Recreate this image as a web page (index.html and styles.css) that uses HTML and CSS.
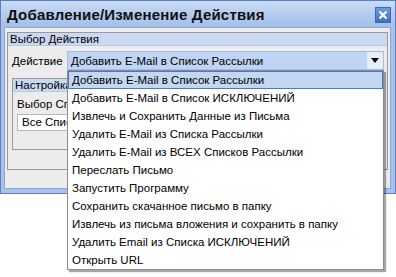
FILE: index.html
```html
<!DOCTYPE html>
<html lang="ru">

<head>
    <meta charset="UTF-8">
    <title>Добавление/Изменение Действия</title>
    <link rel="stylesheet" href="styles.css">
</head>

<body>
    <div class="window">
        <div class="titlebar">
            <span class="title">Добавление/Изменение Действия</span>
            <span class="close">
                <svg width="10" height="10" viewBox="0 0 10 10">
                    <path d="M1.5 1.5 L8.5 8.5 M8.5 1.5 L1.5 8.5" stroke="#fff" stroke-width="2.2" />
                </svg>
            </span>
        </div>

        <div class="content">
            <div class="group outer">
                <div class="group-head">Выбор Действия</div>

                <div class="row">
                    <span class="label">Действие</span>
                    <div class="combo">
                        <span class="combo-text">Добавить E-Mail в Список Рассылки</span>
                        <span class="combo-btn">
                            <svg width="8" height="5" viewBox="0 0 8 5">
                                <path d="M0 0 H8 L4 5 Z" fill="#000" />
                            </svg>
                        </span>

                        <ul class="list">
                            <li class="selected">Добавить E-Mail в Список Рассылки</li>
                            <li>Добавить E-Mail в Список ИСКЛЮЧЕНИЙ</li>
                            <li>Извлечь и Сохранить Данные из Письма</li>
                            <li>Удалить E-Mail из Списка Рассылки</li>
                            <li>Удалить E-Mail из ВСЕХ Списков Рассылки</li>
                            <li>Переслать Письмо</li>
                            <li>Запустить Программу</li>
                            <li>Сохранить скачанное письмо в папку</li>
                            <li>Извлечь из письма вложения и сохранить в папку</li>
                            <li>Удалить Email из Списка ИСКЛЮЧЕНИЙ</li>
                            <li>Открыть URL</li>
                        </ul>
                    </div>
                </div>

                <!-- the part under the open list is hidden anyway -->
                <div class="group inner">
                    <div class="group-head">Настройка</div>
                    <div class="field-label">Выбор Списка</div>
                    <div class="input">Все Списки</div>
                </div>
            </div>
        </div>
    </div>
</body>

</html>
```

FILE: styles.css
```css
* {
    margin: 0;
    padding: 0;
    box-sizing: border-box;
}

body {
    font-family: 'Liberation Sans', Arial, sans-serif;
    font-size: 11.5px;
    color: #000;
    background: #fff;
    width: 396px;
    height: 277px;
    overflow: hidden;
}

.window {
    width: 396px;
    height: 194px;
    border: 1px solid #5b7fc0;
    background: #a9c2ea;
    padding: 0 4px 4px 3px;
    display: flex;
    flex-direction: column;
}

.titlebar {
    height: 26px;
    display: flex;
    align-items: center;
    justify-content: space-between;
    margin: 0 -4px 0 -3px;
    padding: 0 4px 0 6px;
    background: linear-gradient(#cadcf5 0%, #b7cdef 45%, #a3bfe9 100%);
}

.title {
    font-weight: bold;
    font-size: 15px;
    color: #101010;
    letter-spacing: 0.2px;
}

.close {
    width: 16px;
    height: 16px;
    display: flex;
    align-items: center;
    justify-content: center;
    background: linear-gradient(#6f9be0, #3f6fc6);
    border: 1px solid #4067b4;
    margin-top: 2px;
}

.content {
    flex: 1;
    background: #ececec;
    border: 1px solid #8aa6d6;
    padding: 4px 2px 0 2px;
}

.group {
    border: 1px solid #9a9a9a;
    background: #ececec;
}

.group-head {
    height: 13px;
    line-height: 12px;
    background: #c8d9f1;
    padding-left: 2px;
    border-bottom: 1px solid #b9c9e2;
    white-space: nowrap;
}

.outer {
    height: 138px;
}

.row {
    display: flex;
    align-items: center;
    margin: 5px 0 0 4px;
}

.label {
    width: 55px;
    line-height: 14px;
}

.combo {
    position: relative;
    width: 317px;
    height: 19px;
    background: #c0d5f3;
    border: 1px solid #a9bddc;
    display: flex;
    align-items: center;
    justify-content: space-between;
    padding-left: 3px;
    white-space: nowrap;
}

.combo-btn {
    width: 16px;
    height: 17px;
    display: flex;
    align-items: center;
    justify-content: center;
    background: #e6edf8;
}

.list {
    position: absolute;
    left: -1px;
    top: 18px;
    width: 317px;
    list-style: none;
    background: #fff;
    border: 1px solid #8c8c8c;
    box-shadow: 2px 2px 1px rgba(0, 0, 0, 0.35);
    z-index: 2;
}

.list li {
    height: 18px;
    line-height: 16px;
    padding-left: 3px;
    border: 1px solid transparent;
    white-space: nowrap;
}

.list li.selected {
    background: #c3d6f2;
    border-color: #4a78c4;
}

.inner {
    margin: 8px 0 0 4px;
    width: 55px;
    height: 72px;
    white-space: nowrap;
    overflow: hidden;
    border-right: none;
}

.field-label {
    margin: 6px 0 0 4px;
}

.input {
    margin: 4px 0 0 4px;
    height: 17px;
    background: #fff;
    border: 1px solid #b8b8b8;
    border-right: none;
    padding-left: 4px;
    line-height: 15px;
}
```
